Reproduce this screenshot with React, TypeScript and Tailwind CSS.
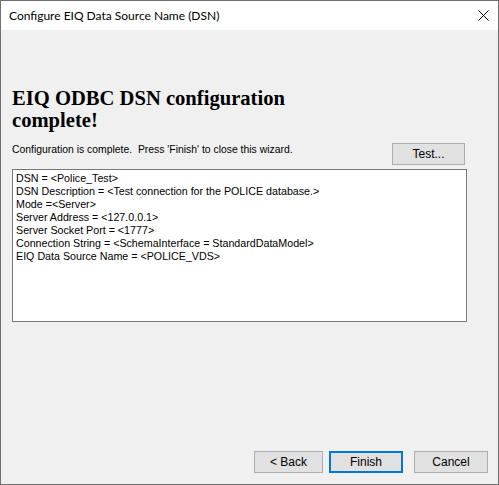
import React from "react";

const lines = [
  "DSN = <Police_Test>",
  "DSN Description = <Test connection for the POLICE database.>",
  "Mode =<Server>",
  "Server Address = <127.0.0.1>",
  "Server Socket Port = <1777>",
  "Connection String = <SchemaInterface = StandardDataModel>",
  "EIQ Data Source Name = <POLICE_VDS>",
];

function WinButton({
  label,
  width,
  primary,
}: {
  label: string;
  width: string;
  primary?: boolean;
}) {
  return (
    <div
      className={`${width} h-[22px] flex items-center justify-center bg-[#e1e1e1] text-[12px] text-black ${
        primary ? "border-2 border-[#0078d7]" : "border border-[#adadad]"
      }`}
      style={{ fontFamily: '"Liberation Sans", Arial, sans-serif' }}
    >
      {label}
    </div>
  );
}

export default function App() {
  return (
    <div className="w-[499px] h-[485px] bg-[#f0f0f0] border border-[#707070] flex flex-col overflow-hidden">
      {/* title bar */}
      <div className="h-[29px] bg-white flex items-center justify-between pl-[8px] pr-[9px] shrink-0">
        <span
          className="text-[12px] text-black"
          style={{ fontFamily: 'Lato, "Liberation Sans", sans-serif' }}
        >
          Configure EIQ Data Source Name (DSN)
        </span>
        <svg width="11" height="11" viewBox="0 0 11 11">
          <path d="M0.5 0.5 L10.5 10.5 M10.5 0.5 L0.5 10.5" stroke="#000" strokeWidth="1" />
        </svg>
      </div>

      {/* body */}
      <div
        className="flex flex-col flex-1 pl-[11px]"
        style={{ fontFamily: '"Liberation Sans", Arial, sans-serif' }}
      >
        <h1
          className="mt-[57px] w-[300px] text-[20.6px] leading-[22px] font-bold text-black"
          style={{ fontFamily: '"Liberation Serif", "Times New Roman", serif' }}
        >
          EIQ ODBC DSN configuration complete!
        </h1>

        <div className="mt-[12px] w-[455px] flex items-start justify-between">
          <span className="text-[10.4px] leading-[13px] text-black whitespace-pre">
            {"Configuration is complete.  Press 'Finish' to close this wizard."}
          </span>
          <div className="mr-[2px]">
            <WinButton label="Test..." width="w-[73px]" />
          </div>
        </div>

        <div className="mt-[4px] w-[455px] h-[153px] bg-white border border-[#7a7a7a] pt-[2px] pl-[3px]">
          {lines.map((l) => (
            <div key={l} className="text-[10.7px] leading-[13px] text-black whitespace-pre">
              {l}
            </div>
          ))}
        </div>

        <div className="flex-1" />

        <div className="flex items-center justify-end pr-[10px] mb-[11px]">
          <WinButton label="< Back" width="w-[69px]" />
          <div className="ml-[6px]">
            <WinButton label="Finish" width="w-[74px]" primary />
          </div>
          <div className="ml-[11px]">
            <WinButton label="Cancel" width="w-[74px]" />
          </div>
        </div>
      </div>
    </div>
  );
}
